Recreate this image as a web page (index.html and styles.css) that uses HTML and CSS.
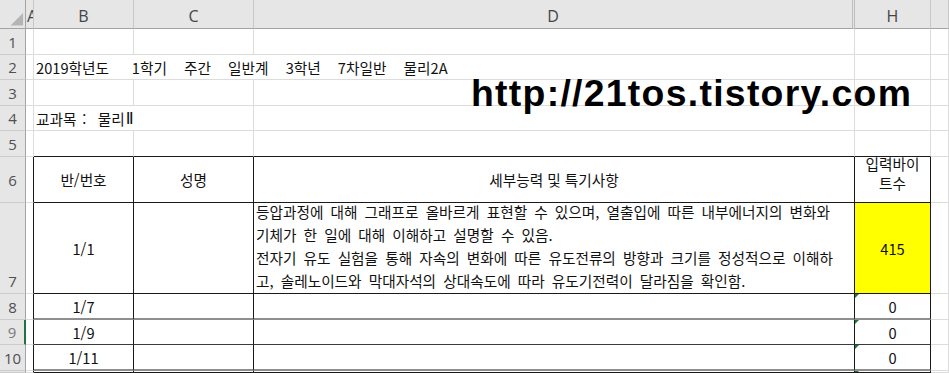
FILE: index.html
```html
<!DOCTYPE html>
<html lang="ko">
<head>
<meta charset="utf-8">
<title>물리2A 세부능력 및 특기사항</title>
<link rel="stylesheet" href="styles.css">
</head>
<body>
<div class="sheet">
  <!-- header row -->
  <div class="ch corner"><svg width="26" height="29" viewBox="0 0 26 29"><polygon points="24,13 24,26 11,26" fill="#b4b4b4"/></svg></div>
  <div class="ch col-a">A</div>
  <div class="ch">B</div>
  <div class="ch">C</div>
  <div class="ch col-d">D</div>
  <div class="ch">H</div>
  <div class="ch"></div>

  <!-- row 1 -->
  <div class="rh">1</div><div class="c"></div><div class="c"></div><div class="c"></div><div class="c"></div><div class="c"></div><div class="c"></div>

  <!-- row 2 -->
  <div class="rh">2</div><div class="c"></div>
  <div class="c span3 txt">2019학년도    1학기   주간   일반계   3학년   7차일반   물리2A</div>
  <div class="c"></div><div class="c"></div>

  <!-- row 3 -->
  <div class="rh">3</div><div class="c"></div><div class="c"></div><div class="c"></div><div class="c"></div><div class="c"></div><div class="c"></div>

  <!-- row 4 -->
  <div class="rh">4</div><div class="c"></div>
  <div class="c span2 txt">교과목 :  물리<span class="roman">Ⅱ</span></div>
  <div class="c"></div><div class="c"></div><div class="c"></div>

  <!-- row 5 -->
  <div class="rh">5</div><div class="c"></div>
  <div class="c top-edge"></div><div class="c top-edge"></div><div class="c top-edge"></div><div class="c top-edge"></div>
  <div class="c"></div>

  <!-- row 6 -->
  <div class="rh">6</div><div class="c left-edge"></div>
  <div class="t">반/번호</div>
  <div class="t">성명</div>
  <div class="t">세부능력 및 특기사항</div>
  <div class="t"><div class="wrap2">입력바이<br>트수</div></div>
  <div class="c"></div>

  <!-- row 7 -->
  <div class="rh rh-bottom">7</div><div class="c left-edge"></div>
  <div class="t">1/1</div>
  <div class="t"></div>
  <div class="t t-left"><div class="para">등압과정에 대해 그래프로 올바르게 표현할 수 있으며, 열출입에 따른 내부에너지의 변화와<br>기체가 한 일에 대해 이해하고 설명할 수 있음.<br>전자기 유도 실험을 통해 자속의 변화에 따른 유도전류의 방향과 크기를 정성적으로 이해하<br>고, 솔레노이드와 막대자석의 상대속도에 따라 유도기전력이 달라짐을 확인함.</div></div>
  <div class="t yellow">415</div>
  <div class="c"></div>

  <!-- row 8 -->
  <div class="rh">8</div><div class="c left-edge"></div>
  <div class="t gray-line">1/7</div>
  <div class="t gray-line"></div>
  <div class="t gray-line"></div>
  <div class="t gray-line flag">0</div>
  <div class="c"></div>

  <!-- row 9 -->
  <div class="rh rh-active">9</div><div class="c left-edge"></div>
  <div class="t dark-line">1/9</div>
  <div class="t dark-line"></div>
  <div class="t dark-line"></div>
  <div class="t dark-line flag">0</div>
  <div class="c"></div>

  <!-- row 10 -->
  <div class="rh">10</div><div class="c left-edge"></div>
  <div class="t gray-line">1/11</div>
  <div class="t gray-line"></div>
  <div class="t gray-line"></div>
  <div class="t gray-line flag">0</div>
  <div class="c"></div>

  <!-- row 11 (only its top edge is in view) -->
  <div class="rh"></div><div class="c left-edge"></div>
  <div class="t"></div><div class="t"></div><div class="t"></div><div class="t flag"></div>
  <div class="c"></div>

  <div class="url">http://21tos.tistory.com</div>
</div>
</body>
</html>
```

FILE: styles.css
```css
html, body {
  margin: 0;
  padding: 0;
  background: #ffffff;
}

.sheet {
  position: relative;
  width: 949px;
  height: 373px;
  overflow: hidden;
  display: grid;
  grid-template-columns: 26px 8px 100px 120px 601px 76px 1fr;
  grid-template-rows: 29px 26px 25px 26px 25px 26px 46px 91px 26px 25px 26px 1fr;
  font-family: "Noto Sans CJK KR", "Noto Sans", sans-serif;
  font-size: 14.67px;
  color: #111;
}

.sheet > div {
  box-sizing: border-box;
  min-width: 0;
  min-height: 0;
}

/* column headers */
.ch {
  background: #e6e6e6;
  border-right: 1px solid #c8c8c8;
  border-bottom: 1px solid #a3a3a3;
  display: flex;
  align-items: center;
  justify-content: center;
  padding-top: 4px;
  font-family: "Open Sans", "DejaVu Sans", sans-serif;
  font-size: 16px;
  color: #454545;
  overflow: hidden;
}

.corner {
  padding: 0;
  border-right: 1px solid #a3a3a3;
}

.corner svg {
  display: block;
}

.col-a {
  justify-content: flex-start;
  padding-left: 1px;
}

.col-d {
  border-right: 3px double #bdbdbd;
}

/* row headers */
.rh {
  background: #e6e6e6;
  border-right: 1px solid #a3a3a3;
  border-bottom: 1px solid #cccccc;
  display: flex;
  align-items: center;
  justify-content: center;
  font-family: "Open Sans", "DejaVu Sans", sans-serif;
  font-size: 15px;
  color: #505050;
  overflow: hidden;
}

.rh-bottom {
  align-items: flex-end;
  padding-bottom: 2px;
}

.rh-active {
  border-right: 2px solid #217346;
  color: #7a7a7a;
}

/* plain cells */
.c {
  border-right: 1px solid #dcdcdc;
  border-bottom: 1px solid #dcdcdc;
  display: flex;
  align-items: center;
  white-space: nowrap;
  overflow: hidden;
}

.span3 {
  grid-column: span 3;
}

.span2 {
  grid-column: span 2;
}

.txt {
  padding-left: 2px;
  white-space: pre;
  word-spacing: 1.6px;
}

.roman {
  font-family: "DejaVu Sans", sans-serif;
  font-size: 16px;
  margin-left: 1px;
}

.top-edge {
  border-bottom-color: #1a1a1a;
}

.left-edge {
  border-right-color: #1a1a1a;
}

/* table cells */
.t {
  position: relative;
  border-right: 1px solid #1a1a1a;
  border-bottom: 1px solid #1a1a1a;
  display: flex;
  align-items: center;
  justify-content: center;
  white-space: nowrap;
  overflow: hidden;
}

.t-left {
  justify-content: flex-start;
  align-items: flex-start;
  padding-left: 2px;
}

.para {
  line-height: 23px;
  margin-top: -3px;
  word-spacing: 3px;
}

.wrap2 {
  text-align: center;
  line-height: 18.5px;
  margin-top: -12px;
}

.yellow {
  background: #ffff00;
}

.gray-line {
  border-bottom: 2px solid #8e8e8e;
}

.dark-line {
  border-bottom: 1px solid #3a3a3a;
}

.flag::before {
  content: "";
  position: absolute;
  left: 0;
  top: 0;
  border-top: 4px solid #1d7a3a;
  border-right: 4px solid transparent;
}

/* overlay text box */
.url {
  position: absolute;
  left: 471px;
  top: 75px;
  font-family: "Liberation Sans", Arial, sans-serif;
  font-weight: bold;
  font-size: 37.33px;
  line-height: 37px;
  letter-spacing: 1.3px;
  color: #000;
  white-space: nowrap;
}
```
